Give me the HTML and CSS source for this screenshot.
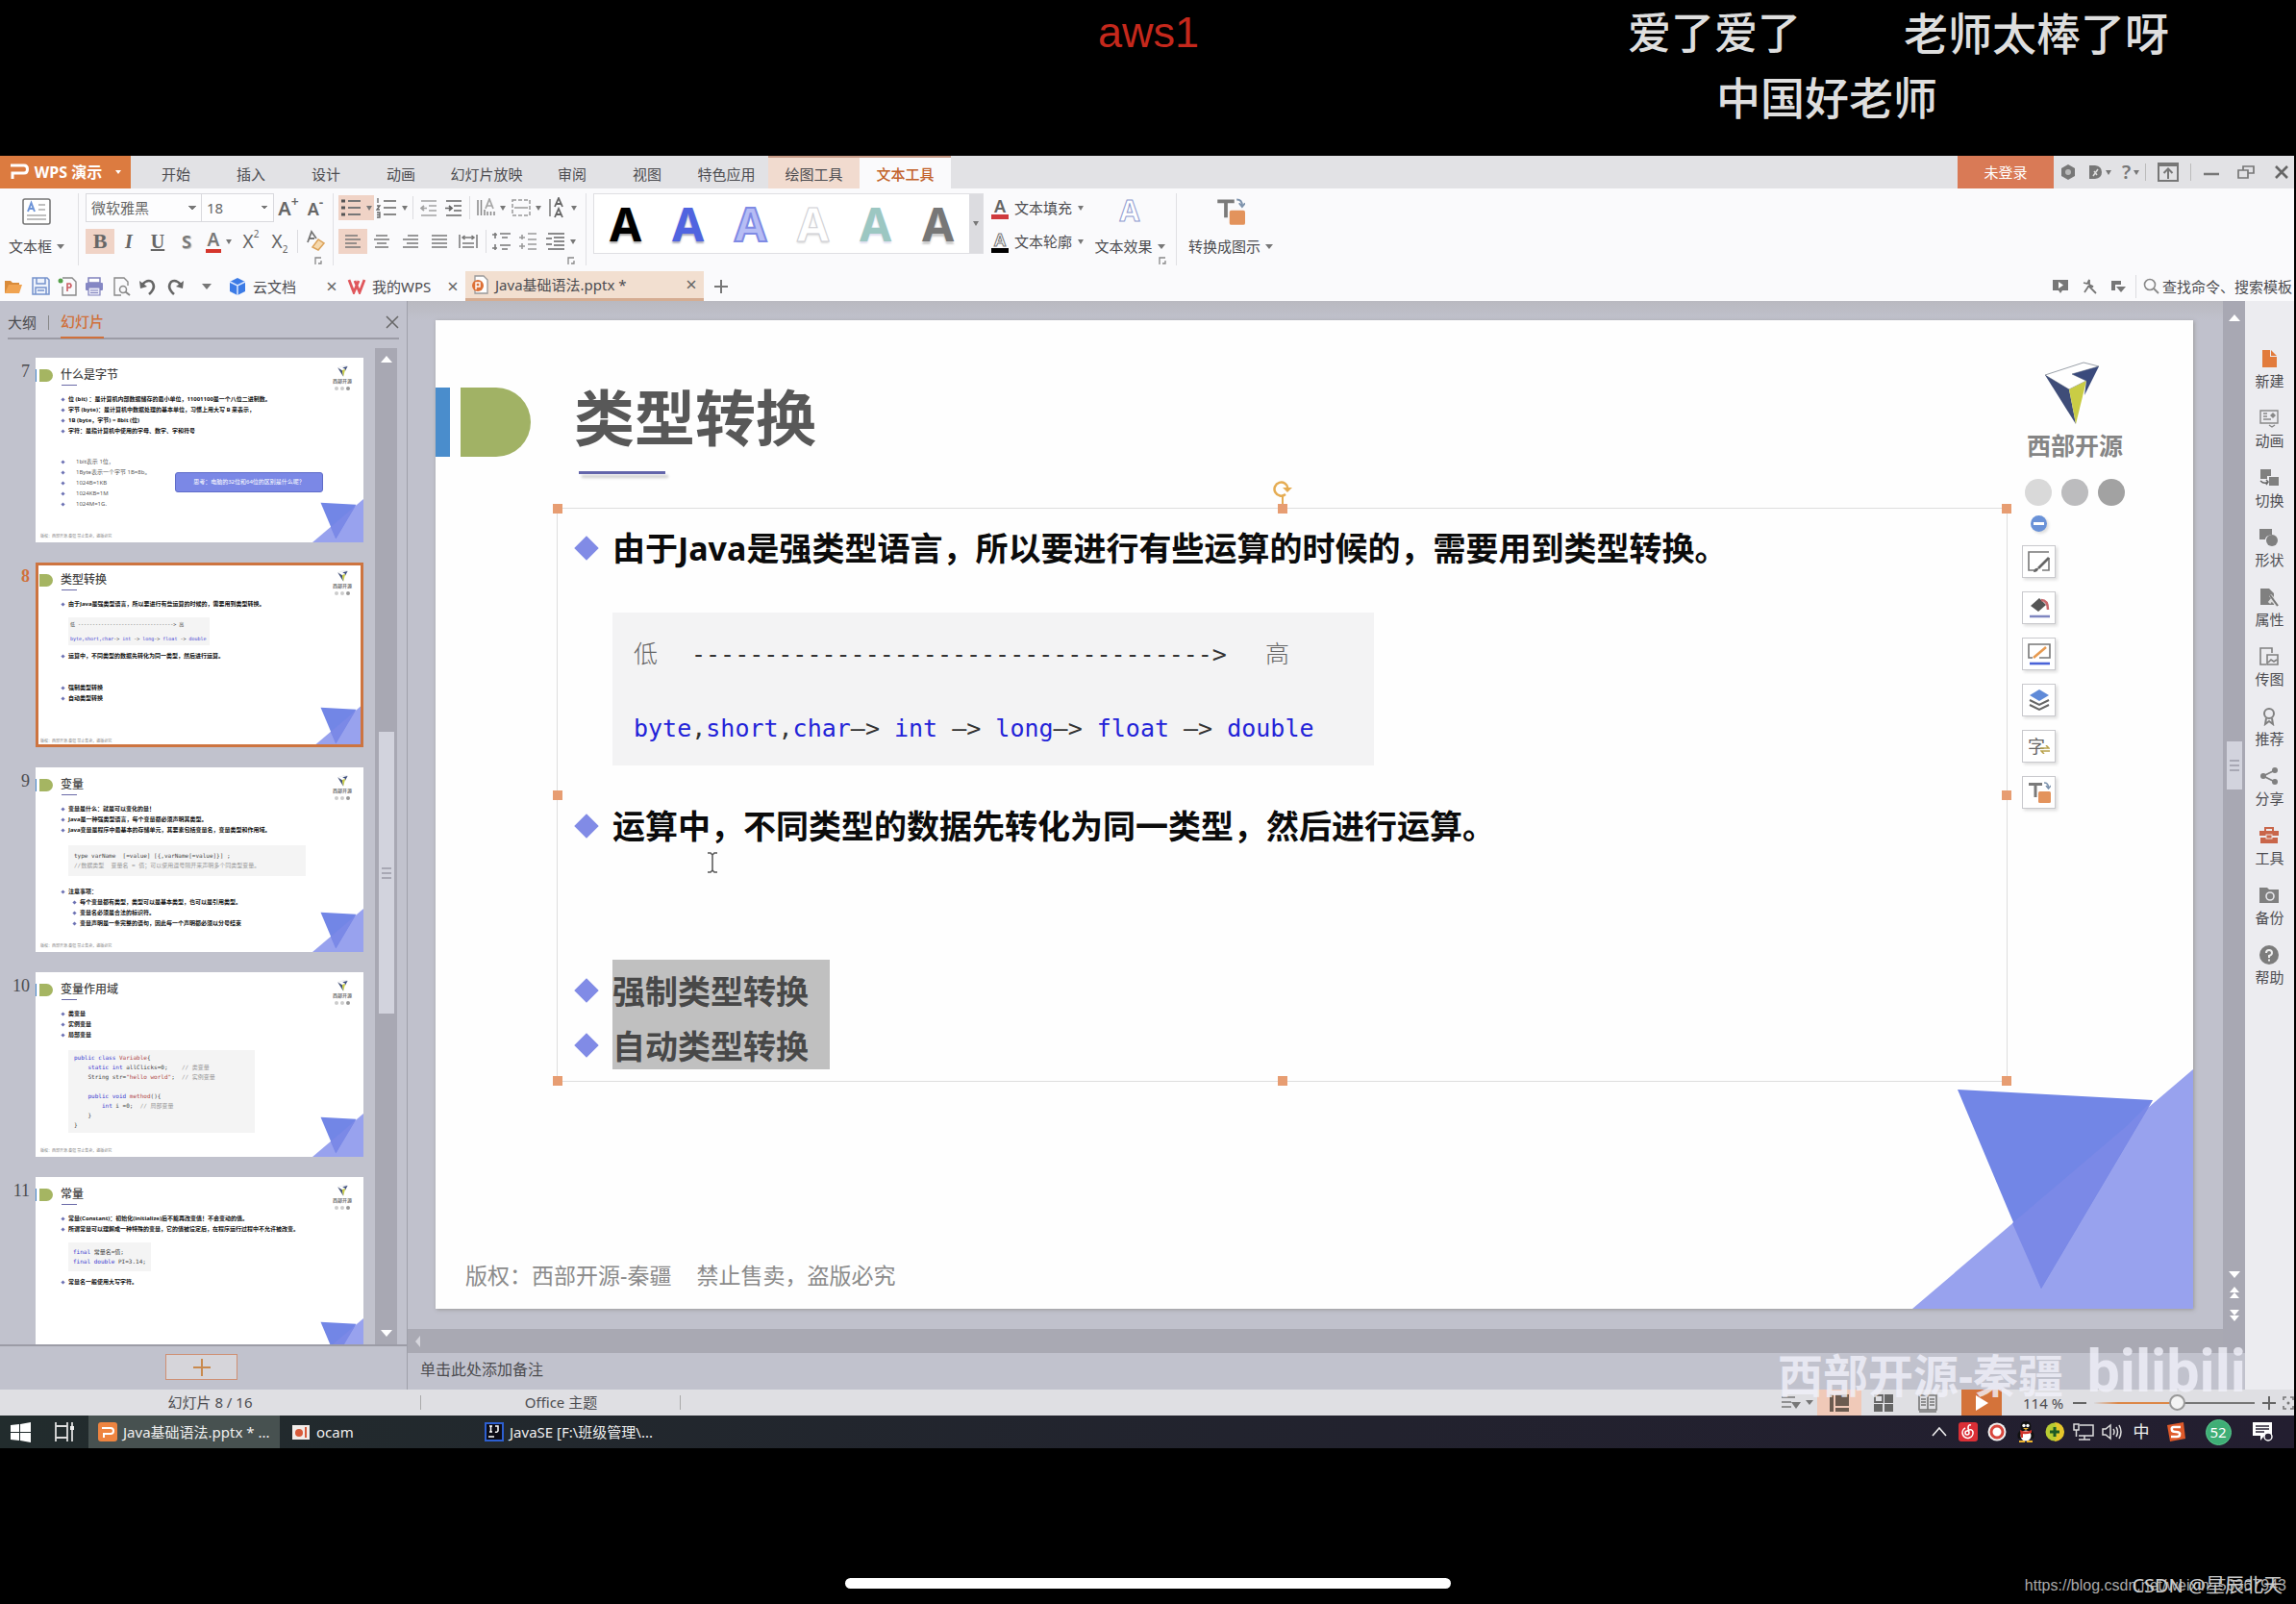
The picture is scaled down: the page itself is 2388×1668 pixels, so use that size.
FILE: index.html
```
<!DOCTYPE html>
<html lang="zh-CN">
<head>
<meta charset="utf-8">
<title>Java基础语法.pptx - WPS 演示</title>
<link rel="stylesheet" href="styles.css">
</head>
<body>
<svg class="defs" width="0" height="0" aria-hidden="true">
  <symbol id="brand" viewBox="0 0 57 66">
    <path d="M0 14 L40 1 L56 5 L32 65Z" fill="#fff"/>
    <path d="M0 14 L40 1 L56 5 L28 13 L43 20 L25 29Z" fill="#fff" stroke="#9aa0a8" stroke-width="1"/>
    <path d="M0 14 L25 29 L32 65Z" fill="#3f4d78"/>
    <path d="M25 29 L43 20 L32 65Z" fill="#c9cc45"/>
    <path d="M56 5 L28 13 L43 20 L41 35Z" fill="#3a4a7c"/>
  </symbol>
  <symbol id="corner" viewBox="0 0 292 249" preserveAspectRatio="none">
    <path d="M0 249 L292 0 V249Z" fill="#98a2ee"/>
    <path d="M47 21 L250 32 L134 228Z" fill="#7286e6"/>
    <path d="M104 160 L224 58 L250 32 L134 228Z" fill="#7b89e7"/>
  </symbol>
  <symbol id="launcher" viewBox="0 0 10 10"><path d="M2 9 V2 H8 M5 8 H8 V5" fill="none" stroke="#888" stroke-width="1.3"/></symbol>
  <symbol id="convert" viewBox="0 0 24 24">
    <path d="M1 2 H15 V5 H9.500 V17 H6.500 V5 H1Z" fill="#7a7a7a"/>
    <rect x="11" y="11" width="13" height="12" rx="1.500" fill="#e3935c"/>
    <path d="M17 2 Q21.500 2 21.500 7 M19 5 L21.500 8 L24 5" fill="none" stroke="#7d93ad" stroke-width="1.500"/>
  </symbol>
</svg>

<header class="chat">
  <span class="chat-line c1">aws1</span>
  <span class="chat-line c2">爱了爱了</span>
  <span class="chat-line c3">老师太棒了呀</span>
  <span class="chat-line c4">中国好老师</span>
</header>

<main class="app">
  <div class="titlebar">
    <button class="wps"><svg width="20" height="20" viewBox="0 0 20 20"><path d="M1 3 H15 Q18.500 3 18.500 7 Q18.500 11 15 11 H3 V17" fill="none" stroke="#fff" stroke-width="3"/></svg><b>WPS 演示</b><i class="caret light"></i></button>
    <nav class="tabs">
      <button>开始</button><button>插入</button><button>设计</button><button>动画</button><button class="wide">幻灯片放映</button><button>审阅</button><button>视图</button><button class="mid">特色应用</button><button class="big tool">绘图工具</button><button class="big current">文本工具</button>
    </nav>
    <button class="login">未登录</button>
    <div class="winbtns">
      <button class="w30" aria-label="设置"><svg width="16" height="16" viewBox="0 0 16 16"><path d="M8 0 L15 4 V12 L8 16 L1 12 V4Z" fill="#777"/><circle cx="8" cy="8" r="3" fill="#b9b9b9"/></svg></button>
      <button class="w35" aria-label="皮肤"><svg width="15" height="16" viewBox="0 0 15 16"><path d="M1 1 H7 Q14 2 14 8 Q14 14 7 15 H1Z" fill="#777"/><path d="M5 12 L10 5 M6 7 L9 11" stroke="#ddd" stroke-width="1.500"/></svg><i class="caret"></i></button>
      <button class="w30 help">?<i class="caret"></i></button>
      <i class="bar"></i>
      <button class="w46" aria-label="收起功能区"><svg width="22" height="20" viewBox="0 0 22 20"><path d="M1 1 H21 V19 H1Z M1 3 H21" fill="none" stroke="#777" stroke-width="2"/><path d="M11 17 V7 M6.500 11 L11 6.500 L15.500 11" fill="none" stroke="#777" stroke-width="2"/></svg></button>
      <i class="bar"></i>
      <button class="w42" aria-label="最小化"><svg width="16" height="16" viewBox="0 0 16 16"><path d="M0 10 H16" stroke="#777" stroke-width="2.500"/></svg></button>
      <button class="w30" aria-label="还原"><svg width="18" height="16" viewBox="0 0 18 16"><path d="M1 6 H11 V14 H1Z M6 6 V2 H17 V9 H11" fill="none" stroke="#777" stroke-width="1.700"/></svg></button>
      <button class="w35 close" aria-label="关闭"><svg width="14" height="14" viewBox="0 0 14 14"><path d="M1 1 L13 13 M13 1 L1 13" stroke="#666" stroke-width="2.600"/></svg></button>
    </div>
  </div>

  <div class="ribbon">
    <div class="group textbox">
      <button class="tall"><svg width="30" height="30" viewBox="0 0 30 30"><rect x="1" y="2" width="28" height="26" rx="2" fill="#fff" stroke="#777" stroke-width="1.600"/><path d="M6 15 L9.500 6 L13 15 M7 12 H12" fill="none" stroke="#6d94d8" stroke-width="2"/><path d="M17 8 H24 M17 13 H24 M5 19 H25 M5 23 H25" stroke="#aaa" stroke-width="1.500"/></svg><span>文本框<i class="caret"></i></span></button>
    </div>
    <div class="group font">
      <div class="row">
        <select class="face" aria-label="字体"><option>微软雅黑</option></select><select class="size" aria-label="字号"><option>18</option></select>
        <button class="w30 big-a">A<sup>+</sup></button><button class="w26 big-a small">A<sup>-</sup></button>
      </div>
      <div class="row">
        <button class="w30 serif on">B</button><button class="w30 serif it">I</button><button class="w30 serif un">U</button><button class="w30 sh">S</button>
        <button class="w37"><span class="fc">A</span><i class="caret"></i></button>
        <button class="w30 xs">X<sup>2</sup></button><button class="w30 xs">X<sub>2</sub></button><i class="sep"></i>
        <button class="w30" aria-label="清除格式"><svg width="22" height="24" viewBox="0 0 22 24"><path d="M3 13 L7 2 L12 9 M4 9 H10" fill="none" stroke="#777" stroke-width="1.800"/><path d="M8 18 L14 10 L20 14 L14 21Z" fill="#f6d9ae" stroke="#dba25a" stroke-width="1.500"/></svg></button>
      </div>
      <svg class="launcher" width="10" height="10"><use href="#launcher"/></svg>
    </div>
    <div class="group para">
      <div class="row">
        <button class="w37 on" aria-label="项目符号"><svg width="22" height="20" viewBox="0 0 22 20"><path d="M8 3 H21 M8 10 H21 M8 17 H21" stroke="#777" stroke-width="2"/><path d="M1 3 H5 M1 10 H5 M1 17 H5" stroke="#555" stroke-width="3"/></svg><i class="caret"></i></button>
        <button class="w37" aria-label="编号"><svg width="22" height="22" viewBox="0 0 22 22"><path d="M8 4 H21 M8 11 H21 M8 18 H21" stroke="#888" stroke-width="2"/><path d="M2 1 V6 M1 9 H4 L1 13 H4 M1 16 H4 V21 H1 M1 18.500 H4" fill="none" stroke="#666" stroke-width="1.300"/></svg><i class="caret"></i></button><i class="sep"></i>
        <button class="w26" aria-label="减少缩进"><svg width="18" height="18" viewBox="0 0 18 18"><path d="M1 2 H17 M9 7 H17 M9 12 H17 M1 17 H17 M7 9.500 H1 M4 7 L1 9.500 L4 12" fill="none" stroke="#a2a2a2" stroke-width="1.700"/></svg></button>
        <button class="w26" aria-label="增加缩进"><svg width="18" height="18" viewBox="0 0 18 18"><path d="M1 2 H17 M9 7 H17 M9 12 H17 M1 17 H17 M0 9.500 H6 M4 7 L7 9.500 L4 12" fill="none" stroke="#666" stroke-width="1.700"/></svg></button><i class="sep"></i>
        <button class="w37" aria-label="文字方向"><svg width="20" height="20" viewBox="0 0 20 20"><path d="M2 2 V18 M5.500 2 V18 M9 12 V18 M12 14 V18 M15.500 14 V18 M19 14 V18" stroke="#888" stroke-width="1.500"/><path d="M10 11 L14 1 L18 11 M11.500 8 H16.500" fill="none" stroke="#a5a5a5" stroke-width="1.700"/></svg><i class="caret"></i></button>
        <button class="w37" aria-label="对齐文本"><svg width="20" height="20" viewBox="0 0 20 20"><rect x="1" y="2" width="18" height="16" fill="none" stroke="#999" stroke-width="1.500" stroke-dasharray="4 2"/><path d="M3 10 H17" stroke="#999" stroke-width="1.500"/></svg><i class="caret"></i></button>
        <button class="w37" aria-label="字符间距"><svg width="20" height="22" viewBox="0 0 20 22"><path d="M3 2 V20" stroke="#777" stroke-width="1.500"/><path d="M8 10 L12 1 L16 10 M9.500 7 H14.500 M8 21 L12 12 L16 21 M9.500 18 H14.500" fill="none" stroke="#666" stroke-width="1.800"/></svg><i class="caret"></i></button>
      </div>
      <div class="row">
        <button class="w30 on" aria-label="左对齐"><svg width="16" height="16" viewBox="0 0 16 16"><path d="M0 2 H13 M0 6 H16 M0 10 H12 M0 14 H16" stroke="#777" stroke-width="1.600"/></svg></button>
        <button class="w30" aria-label="居中"><svg width="16" height="16" viewBox="0 0 16 16"><path d="M2 2 H14 M0 6 H16 M3 10 H13 M1 14 H15" stroke="#777" stroke-width="1.600"/></svg></button>
        <button class="w30" aria-label="右对齐"><svg width="16" height="16" viewBox="0 0 16 16"><path d="M5 2 H16 M0 6 H16 M4 10 H16 M0 14 H16" stroke="#777" stroke-width="1.600"/></svg></button>
        <button class="w30" aria-label="两端对齐"><svg width="16" height="16" viewBox="0 0 16 16"><path d="M0 2 H16 M0 6 H16 M0 10 H16 M0 14 H16" stroke="#777" stroke-width="1.600"/></svg></button>
        <button class="w30" aria-label="分散对齐"><svg width="20" height="16" viewBox="0 0 20 16"><path d="M1 1 V15 M19 1 V15 M4 4 H16 M6.500 2 L4 4 L6.500 6 M13.500 2 L16 4 L13.500 6 M4 10 H16 M4 14 H16" fill="none" stroke="#777" stroke-width="1.500"/></svg></button><i class="sep"></i>
        <button class="w26" aria-label="增大段落间距"><svg width="20" height="20" viewBox="0 0 20 20"><path d="M8 2 H19 M10 6 H16 M8 14 H19 M10 18 H16 M0 3 H5 M3 1 V7 M0 17 H5 M3 13 V19" stroke="#777" stroke-width="1.600"/></svg></button>
        <button class="w30" aria-label="减小段落间距"><svg width="20" height="20" viewBox="0 0 20 20"><path d="M9 2 H18 M9 8 H18 M9 13 H18 M9 18 H18 M0 6 H6 M3 3 V8 M0 15 H6 M3 12 V18" stroke="#999" stroke-width="1.600"/></svg></button>
        <button class="w37" aria-label="行距"><svg width="20" height="18" viewBox="0 0 20 18"><path d="M2 1 H19 M8 5 H19 M8 9 H19 M8 13 H19 M2 17 H19 M0 6 H6 M0 12 H6" stroke="#666" stroke-width="1.700"/></svg><i class="caret"></i></button>
      </div>
      <svg class="launcher" width="10" height="10"><use href="#launcher"/></svg>
    </div>
    <div class="group art">
      <div class="gallery">
        <button class="a1">A</button><button class="a2">A</button><button class="a3">A</button><button class="a4">A</button><button class="a5">A</button><button class="a6">A</button>
        <button class="more" aria-label="更多"><i class="caret"></i></button>
      </div>
      <div class="fills">
        <button><span class="fill-a red">A</span>文本填充<i class="caret"></i></button>
        <button><span class="fill-a line">A</span>文本轮廓<i class="caret"></i></button>
      </div>
      <div class="effects">
        <button class="tall"><span class="effect-a">A</span><span>文本效果<i class="caret"></i></span></button>
        <svg class="launcher" width="10" height="10"><use href="#launcher"/></svg>
      </div>
    </div>
    <div class="group last">
      <button class="tall"><svg width="30" height="30"><use href="#convert"/></svg><span>转换成图示<i class="caret"></i></span></button>
    </div>
  </div>

  <div class="docbar">
    <div class="quick">
      <button aria-label="打开"><svg width="20" height="18" viewBox="0 0 20 18"><path d="M1 16 V3 H7 L9 5 H16 V8" fill="#d98b3a"/><path d="M1 16 L5 7 H19 L16 16Z" fill="#f0a351"/></svg></button>
      <button aria-label="保存"><svg width="19" height="19" viewBox="0 0 19 19"><path d="M1 1 H16 L18 3 V18 H1Z" fill="#eef3fc" stroke="#7592cc" stroke-width="1.500"/><path d="M5 1 V7 H14 V1 M4 18 V11 H15 V18 M6 14 H13" fill="none" stroke="#7592cc" stroke-width="1.500"/></svg></button>
      <button aria-label="输出为PDF"><svg width="20" height="20" viewBox="0 0 20 20"><path d="M5 1 H15 L19 5 V19 H5 V10" fill="none" stroke="#888" stroke-width="1.400"/><path d="M10 15 V7 H13 Q15 9 13 11 H10" fill="none" stroke="#cc5c62" stroke-width="1.600"/><circle cx="3" cy="4" r="2.500" fill="#55a04a"/></svg></button>
      <button aria-label="打印"><svg width="20" height="20" viewBox="0 0 20 20"><path d="M4 1 H16 V6 H4Z" fill="#fff" stroke="#8183bd" stroke-width="1.500"/><rect x="1" y="6" width="18" height="8" rx="1" fill="#8587c4"/><path d="M4 11 H16 V19 H4Z M6 14 H14 M6 16.500 H14" fill="#e9e9f6" stroke="#8183bd" stroke-width="1.200"/></svg></button>
      <button aria-label="打印预览"><svg width="19" height="20" viewBox="0 0 19 20"><path d="M9 19 H2 V1 H12 L16 5 V9" fill="none" stroke="#888" stroke-width="1.400"/><circle cx="11" cy="13" r="3.500" fill="none" stroke="#888" stroke-width="1.500"/><path d="M13.500 15.500 L18 19" stroke="#888" stroke-width="2"/></svg></button>
      <button aria-label="撤销"><svg width="18" height="18" viewBox="0 0 18 18"><path d="M3 7 Q8 1 13 4 Q18 10 10 17" fill="none" stroke="#666" stroke-width="2.600"/><path d="M0 3 L1 11 L8 9Z" fill="#666"/></svg></button>
      <button aria-label="恢复"><svg width="18" height="18" viewBox="0 0 18 18"><path d="M15 7 Q10 1 5 4 Q0 10 8 17" fill="none" stroke="#666" stroke-width="2.600"/><path d="M18 3 L17 11 L10 9Z" fill="#666"/></svg></button>
      <button class="w42" aria-label="更多"><i class="caret big"></i></button>
    </div>
    <div class="docs">
      <div class="doc d1"><svg width="20" height="20" viewBox="0 0 20 20"><path d="M10 1 L18 5 V15 L10 19 L2 15 V5Z" fill="#3c7be6"/><path d="M2 5 L10 9 L18 5 M10 9 V19" fill="none" stroke="#dce8ff" stroke-width="1.500"/></svg><span>云文档</span><button aria-label="关闭">×</button></div>
      <div class="doc d2"><svg width="20" height="16" viewBox="0 0 20 16"><path d="M2 1 L7 14 L12 2 M8 2 L13 14 L18 1" fill="none" stroke="#e0575c" stroke-width="2.800"/></svg><span>我的WPS</span><button aria-label="关闭">×</button></div>
      <div class="doc d3"><svg width="20" height="20" viewBox="0 0 20 20"><path d="M5 1 H14 L18 5 V19 H5Z" fill="#fff" stroke="#999" stroke-width="1.300"/><circle cx="8" cy="11" r="6" fill="#dd7036"/><path d="M6 15 V8 H10 V12 H6" fill="none" stroke="#fff" stroke-width="1.400"/></svg><span>Java基础语法.pptx *</span><button aria-label="关闭">×</button></div>
      <button class="plus" aria-label="新建"><svg width="16" height="16" viewBox="0 0 16 16"><path d="M8 1 V15 M1 8 H15" stroke="#777" stroke-width="2"/></svg></button>
    </div>
    <div class="find">
      <button class="w30" aria-label="播放"><svg width="16" height="16" viewBox="0 0 16 16"><path d="M0 1 H16 V12 H10 L8 15 L6 12 H0Z" fill="#777"/><path d="M6 3 L11 6.500 L6 10Z" fill="#fff"/></svg></button>
      <button class="w30" aria-label="美化"><svg width="16" height="16" viewBox="0 0 16 16"><path d="M2 4 L6 5 L8 1 L8 6 L12 8 L8 8 L15 15 M7 8 L3 14" fill="none" stroke="#777" stroke-width="1.800"/></svg></button>
      <button class="w30" aria-label="切换"><svg width="16" height="16" viewBox="0 0 16 16"><path d="M1 2 H11 V6 H5 V12 H1Z" fill="#777"/><path d="M6 8 H16 L11 14Z" fill="#777"/></svg></button>
      <i class="sep"></i>
      <svg width="18" height="18" viewBox="0 0 18 18"><circle cx="7" cy="7" r="5.500" fill="none" stroke="#888" stroke-width="1.600"/><path d="M11 11 L16 16" stroke="#888" stroke-width="1.800"/></svg>
      <input type="text" aria-label="查找" value="查找命令、搜索模板">
    </div>
  </div>

  <div class="work">
    <aside class="panel">
      <div class="panel-head"><button>大纲</button><i></i><button class="sel">幻灯片</button><button class="x" aria-label="关闭"><svg width="14" height="14" viewBox="0 0 14 14"><path d="M1 1 L13 13 M13 1 L1 13" stroke="#666" stroke-width="1.500"/></svg></button></div>
      <div class="list">
        <ol class="thumbs">
          <li><span class="num">7</span>
            <article class="thumb"><header><h3>什么是字节</h3><div class="mini"><svg width="11" height="12"><use href="#brand"/></svg><b>西部开源</b><p><i></i><i></i><i></i></p></div></header>
              <ul class="strong"><li>位 (bit) &#xff1a;是计算机内部数据储存的最小单位&#xff0c;11001100是一个八位二进制数。</li><li>字节 (byte)&#xff1a;是计算机中数据处理的基本单位&#xff0c;习惯上用大写 B 来表示&#xff0c;</li><li>1B (byte&#xff0c;字节) = 8bit (位)</li><li>字符&#xff1a;是指计算机中使用的字母、数字、字和符号</li></ul>
              <div class="pair"><ul class="thin"><li>1bit表示 1位&#xff0c;</li><li>1Byte表示一个字节 1B=8b。</li><li>1024B=1KB</li><li>1024KB=1M</li><li>1024M=1G.</li></ul><p class="callout">思考&#xff1a;电脑的32位和64位的区别是什么呢&#xff1f;</p></div>
              <footer>版权&#xff1a;西部开源-秦疆 禁止售卖&#xff0c;盗版必究</footer><svg class="tri"><use href="#corner"/></svg></article></li>
          <li class="active"><span class="num">8</span>
            <article class="thumb"><header><h3>类型转换</h3><div class="mini"><svg width="11" height="12"><use href="#brand"/></svg><b>西部开源</b><p><i></i><i></i><i></i></p></div></header>
              <ul class="strong"><li>由于Java是强类型语言&#xff0c;所以要进行有些运算的时候的&#xff0c;需要用到类型转换。</li></ul>
              <pre class="code k8">低 ---------------------------------&gt; 高
<b>byte,short,char</b>-&gt; <b>int</b> -&gt; <b>long</b>-&gt; <b>float</b> -&gt; <b>double</b></pre>
              <ul class="strong s8"><li>运算中&#xff0c;不同类型的数据先转化为同一类型&#xff0c;然后进行运算。</li></ul>
              <ul class="strong e8"><li>强制类型转换</li><li>自动类型转换</li></ul>
              <footer>版权&#xff1a;西部开源-秦疆 禁止售卖&#xff0c;盗版必究</footer><svg class="tri"><use href="#corner"/></svg></article></li>
          <li><span class="num">9</span>
            <article class="thumb"><header><h3>变量</h3><div class="mini"><svg width="11" height="12"><use href="#brand"/></svg><b>西部开源</b><p><i></i><i></i><i></i></p></div></header>
              <ul class="strong"><li>变量是什么&#xff1a;就是可以变化的量&#xff01;</li><li>Java是一种强类型语言&#xff0c;每个变量都必须声明其类型。</li><li>Java变量是程序中最基本的存储单元&#xff0c;其要素包括变量名&#xff0c;变量类型和作用域。</li></ul>
              <pre class="code k9">type varName  [=value] [{,varName[=value]}] ;
<s>//数据类型  变量名 = 值&#xff1b;可以使用逗号隔开来声明多个同类型变量。</s></pre>
              <ul class="strong s9"><li>注意事项&#xff1a;</li><li class="sub">每个变量都有类型&#xff0c;类型可以是基本类型&#xff0c;也可以是引用类型。</li><li class="sub">变量名必须是合法的标识符。</li><li class="sub">变量声明是一条完整的语句&#xff0c;因此每一个声明都必须以分号结束</li></ul>
              <footer>版权&#xff1a;西部开源-秦疆 禁止售卖&#xff0c;盗版必究</footer><svg class="tri"><use href="#corner"/></svg></article></li>
          <li><span class="num">10</span>
            <article class="thumb"><header><h3>变量作用域</h3><div class="mini"><svg width="11" height="12"><use href="#brand"/></svg><b>西部开源</b><p><i></i><i></i><i></i></p></div></header>
              <ul class="strong"><li>类变量</li><li>实例变量</li><li>局部变量</li></ul>
              <pre class="code k10"><b>public class</b> <em>Variable</em>{
    <b>static int</b> allClicks=0;    <s>// 类变量</s>
    String str=<em>"hello world"</em>;  <s>// 实例变量</s>

    <b>public void</b> <em>method</em>(){
        <b>int</b> i =0;  <s>// 局部变量</s>
    }
}</pre>
              <footer>版权&#xff1a;西部开源-秦疆 禁止售卖&#xff0c;盗版必究</footer><svg class="tri"><use href="#corner"/></svg></article></li>
          <li><span class="num">11</span>
            <article class="thumb"><header><h3>常量</h3><div class="mini"><svg width="11" height="12"><use href="#brand"/></svg><b>西部开源</b><p><i></i><i></i><i></i></p></div></header>
              <ul class="strong"><li>常量(Constant)&#xff1a;初始化(initialize)后不能再改变值&#xff01;不会变动的值。</li><li>所谓常量可以理解成一种特殊的变量&#xff0c;它的值被设定后&#xff0c;在程序运行过程中不允许被改变。</li></ul>
              <pre class="code k11"><b>final</b> 常量名=值;
<b>final double</b> PI=3.14;</pre>
              <ul class="strong s8"><li>常量名一般使用大写字符。</li></ul>
              <svg class="tri"><use href="#corner"/></svg></article></li>
        </ol>
        <div class="vbar"><i class="up"></i><span class="grip"><svg width="10" height="12" viewBox="0 0 10 12"><path d="M0 1 H10 M0 6 H10 M0 11 H10" stroke="#9a9aa6" stroke-width="1.500"/></svg></span><i class="down"></i></div>
      </div>
      <div class="add"><button aria-label="新建幻灯片"><svg width="18" height="18" viewBox="0 0 18 18"><path d="M9 0 V18 M0 9 H18" stroke="#c98a4e" stroke-width="2"/></svg></button></div>
    </aside>

    <section class="editor">
      <div class="stage">
        <article class="slide">
          <header class="slide-head">
            <i class="blue"></i><i class="green"></i>
            <h1>类型转换</h1>
            <div class="logo"><svg width="57" height="66"><use href="#brand"/></svg><b>西部开源</b><p><i></i><i></i><i></i></p></div>
          </header>
          <div class="body-box">
            <p class="pt">由于Java是强类型语言&#xff0c;所以要进行有些运算的时候的&#xff0c;需要用到类型转换。</p>
            <pre class="sample"><span><q>低</q>------------------------------------&gt;<q class="hi">高</q></span><span><b>byte</b>,<b>short</b>,<b>char</b>—&gt; <b>int</b> —&gt; <b>long</b>—&gt; <b>float</b> —&gt; <b>double</b></span></pre>
            <p class="pt">运算中&#xff0c;不同类型的数据先转化为同一类型&#xff0c;然后进行运算。</p>
            <div class="picked"><p class="pt"><mark>强制类型转换</mark></p><p class="pt"><mark>自动类型转换</mark></p></div>
            <i class="h tl"></i><i class="h tc"></i><i class="h tr"></i><i class="h ml"></i><i class="h mr"></i><i class="h bl"></i><i class="h bc"></i><i class="h br"></i>
            <svg class="rotate" width="20" height="24" viewBox="0 0 20 24"><path d="M13 14 A7 7 0 1 1 15.500 8" fill="none" stroke="#e5ac52" stroke-width="2.500"/><path d="M10 7 H20 L15 12Z" fill="#e5ac52"/><path d="M10 15 V24" stroke="#e5ac52" stroke-width="2"/></svg>
            <svg class="ibeam" width="12" height="22" viewBox="0 0 12 22"><path d="M1 1 H4 L6 3 L8 1 H11 M6 3 V19 M1 21 H4 L6 19 L8 21 H11" fill="none" stroke="#555" stroke-width="1.500"/></svg>
          </div>
          <footer>版权&#xff1a;西部开源-秦疆<span>禁止售卖&#xff0c;盗版必究</span></footer>
          <svg class="corner"><use href="#corner"/></svg>
          <div class="floats">
            <button class="min" aria-label="收起"></button>
            <button aria-label="样式"><svg width="24" height="24" viewBox="0 0 24 24"><path d="M22 8 V21 H15 M7 21 H1 V2 H22" fill="none" stroke="#777" stroke-width="1.600"/><path d="M22 8 L11 19" stroke="#666" stroke-width="2.600"/><path d="M6 23 Q7 18 11 19 Q11 23 6 23Z" fill="#666"/></svg></button>
            <button aria-label="填充"><svg width="24" height="24" viewBox="0 0 24 24"><path d="M3 10 L12 2 L19 9 L11 16Z" fill="#555"/><path d="M14 4 Q21 4 21 14" fill="none" stroke="#c8686c" stroke-width="2.500"/><path d="M2 21 H23" stroke="#7f86c0" stroke-width="2.500"/></svg></button>
            <button aria-label="轮廓"><svg width="24" height="24" viewBox="0 0 24 24"><path d="M5 16 H1 V2 H23 V16 H12" fill="none" stroke="#777" stroke-width="1.600"/><path d="M19 5 L6 16" stroke="#e79a50" stroke-width="2.600"/><path d="M2 22 H23" stroke="#4a63d8" stroke-width="2.600"/></svg></button>
            <button aria-label="层次"><svg width="24" height="24" viewBox="0 0 24 24"><path d="M12 1 L22 7 L12 13 L2 7Z" fill="#5f8ad8"/><path d="M2 12 L12 17 L22 12 M2 17 L12 22 L22 17" fill="none" stroke="#666" stroke-width="2"/></svg></button>
            <button class="zi" aria-label="字">字<svg width="10" height="9" viewBox="0 0 10 9"><path d="M0 3 H9 L6 0 M10 6 H1 L4 9" fill="none" stroke="#b9a24c" stroke-width="1.500"/></svg></button>
            <button aria-label="转换"><svg width="24" height="24"><use href="#convert"/></svg></button>
          </div>
        </article>
      </div>
      <div class="hbar"><i></i></div>
      <div class="vbar main"><i class="up"></i><span class="grip"><svg width="10" height="14" viewBox="0 0 10 14"><path d="M0 2 H10 M0 7 H10 M0 12 H10" stroke="#9a9aa6" stroke-width="1.500"/></svg></span><span class="ends"><i class="down"></i><svg width="12" height="14" viewBox="0 0 12 14"><path d="M6 0 L11 6 H1Z M6 6 L11 12 H1Z" fill="#fff"/></svg><svg width="12" height="14" viewBox="0 0 12 14"><path d="M1 1 H11 L6 7Z M1 7 H11 L6 13Z" fill="#fff"/></svg></span></div>
      <input class="notes" type="text" aria-label="备注" value="单击此处添加备注">
    </section>

    <nav class="side">
      <button><svg width="20" height="20" viewBox="0 0 20 20"><path d="M3 1 H11 V8 H18 V19 H3Z M12 1 L18 7 H12Z" fill="#e27b3c"/></svg>新建</button>
      <button><svg width="20" height="20" viewBox="0 0 20 20"><path d="M1 2 H19 V15 H1Z M4 5 H8 M4 8 H8 M4 11 H12 M10 17 L13 19 L16 17" fill="none" stroke="#888" stroke-width="1.400"/><path d="M14 4 L17 7 L14 10 L11 7Z" fill="#888"/></svg>动画</button>
      <button><svg width="20" height="20" viewBox="0 0 20 20"><path d="M1 1 H12 V8 H8 V11 H1Z M10 9 H20 V18 H10Z" fill="#808080"/><path d="M1 13 Q5 17 9 14 M7 12 L9 14 L7 17" fill="none" stroke="#666" stroke-width="1.500"/></svg>切换</button>
      <button><svg width="20" height="20" viewBox="0 0 20 20"><path d="M0 1 H13 V7 Q6 8 6 12 H0Z" fill="#808080"/><circle cx="13" cy="13" r="6" fill="#808080"/></svg>形状</button>
      <button><svg width="20" height="20" viewBox="0 0 20 20"><path d="M1 1 H10 L15 6 V18 H1Z" fill="#808080"/><path d="M11 8 L14 11 L10 16 M13 13 L19 19" stroke="#ddd" stroke-width="3" fill="none"/><path d="M11 8 L19 19" stroke="#777" stroke-width="2"/></svg>属性</button>
      <button><svg width="20" height="20" viewBox="0 0 20 20"><path d="M7 18 H1 V1 H13 V6 M8 8 H19 V18 H8Z M9 16 L12 13 L15 15 L18 13" fill="none" stroke="#808080" stroke-width="1.600"/></svg>传图</button>
      <button><svg width="20" height="20" viewBox="0 0 20 20"><circle cx="10" cy="7" r="5" fill="none" stroke="#808080" stroke-width="2"/><path d="M7 12 L6 18 L10 15 L14 18 L13 12" fill="none" stroke="#808080" stroke-width="2"/></svg>推荐</button>
      <button><svg width="20" height="20" viewBox="0 0 20 20"><path d="M16 4 L4 10 L16 16" fill="none" stroke="#808080" stroke-width="1.800"/><circle cx="16" cy="4" r="3" fill="#808080"/><circle cx="4" cy="10" r="3" fill="#808080"/><circle cx="16" cy="16" r="3" fill="#808080"/></svg>分享</button>
      <button><svg width="20" height="20" viewBox="0 0 20 20"><path d="M6 5 V2 H14 V5" fill="none" stroke="#c9664a" stroke-width="2"/><path d="M0 5 H20 V10 H0Z M1 12 H19 V18 H1Z" fill="#c9664a"/><rect x="7" y="9" width="6" height="4" fill="#c9664a" stroke="#f0e4e0"/></svg>工具</button>
      <button><svg width="20" height="20" viewBox="0 0 20 20"><path d="M0 2 H8 L10 4 H20 V18 H0Z" fill="#808080"/><circle cx="11" cy="11" r="4" fill="none" stroke="#e8e8ec" stroke-width="1.600"/></svg>备份</button>
      <button><svg width="20" height="20" viewBox="0 0 20 20"><circle cx="10" cy="10" r="10" fill="#7c7c7c"/><path d="M7 8 Q7 5 10 5 Q13 5 13 8 Q13 10 10 11 V13 M10 14.500 V16.500" fill="none" stroke="#eee" stroke-width="2"/></svg>帮助</button>
    </nav>
  </div>

  <div class="status">
    <span class="pages">幻灯片 8 / 16</span><span class="theme">Office 主题</span>
    <div class="views">
      <button class="w42" aria-label="备注"><svg width="20" height="16" viewBox="0 0 20 16"><path d="M0 2 H14 M0 7 H10 M0 12 H10" stroke="#777" stroke-width="1.600"/><path d="M10 7 H20 L15 14Z" fill="#777"/></svg><i class="caret"></i></button>
      <button class="w46 on" aria-label="普通视图"><svg width="20" height="20" viewBox="0 0 20 20"><path d="M0 1 H4 V19 H0Z M6 1 H20 V13 H6Z M6 15 H20 V19 H6Z" fill="#6b5b50"/></svg></button>
      <button class="w46" aria-label="浏览视图"><svg width="20" height="20" viewBox="0 0 20 20"><path d="M1 2 H9 V9 H1Z" fill="none" stroke="#666" stroke-width="1.800"/><path d="M11 1 H20 V10 H11Z M0 11 H9 V19 H0Z M11 11 H20 V19 H11Z" fill="#666"/></svg></button>
      <button class="w46" aria-label="阅读视图"><svg width="20" height="20" viewBox="0 0 20 20"><path d="M1 2 H10 V17 H1Z M10 2 H19 V17 H10Z M3 6 H8 M3 9 H8 M3 12 H8 M12 6 H17 M12 9 H17 M12 12 H17 M1 19 H19" fill="none" stroke="#777" stroke-width="1.600"/></svg></button>
      <button class="play" aria-label="放映"><svg width="14" height="16" viewBox="0 0 14 16"><path d="M1 0 L14 8 L1 16Z" fill="#fff"/></svg></button>
      <span class="pct">114 %</span>
      <button class="w26" aria-label="缩小"><svg width="14" height="14" viewBox="0 0 14 14"><path d="M0 7 H14" stroke="#666" stroke-width="2"/></svg></button>
      <input type="range" aria-label="缩放" min="0" max="100" value="52">
      <button class="w26" aria-label="放大"><svg width="14" height="14" viewBox="0 0 14 14"><path d="M0 7 H14 M7 0 V14" stroke="#666" stroke-width="2"/></svg></button>
      <button class="fit" aria-label="适应窗口"><svg width="12" height="14" viewBox="0 0 12 14"><path d="M1 4 V1 H4 M8 1 H11 V4 M1 10 V13 H4 M8 13 H11 V10" fill="none" stroke="#777" stroke-width="1.600"/><circle cx="6" cy="7" r="1.500" fill="#777"/></svg></button>
    </div>
  </div>

  <div class="taskbar">
    <button class="start" aria-label="开始"><svg width="21" height="21" viewBox="0 0 21 21"><path d="M0 3 L9 2 V10 H0Z M10 2 L21 0 V10 H10Z M0 11 H9 V19 L0 18Z M10 11 H21 V21 L10 19Z" fill="#fff"/></svg></button>
    <button class="start view" aria-label="任务视图"><svg width="22" height="20" viewBox="0 0 22 20"><path d="M2 0 V4 H14 V0 M2 20 V16 H14 V20 M2 4 V16 M14 4 V16 M19 0 V4 M19 8 V20" fill="none" stroke="#ddd" stroke-width="1.800"/><rect x="17" y="4" width="4" height="4" fill="#eee"/></svg></button>
    <button class="task open"><svg width="20" height="20" viewBox="0 0 20 20"><rect width="20" height="20" rx="3" fill="#ee8440"/><path d="M4 6 H13 Q16 6 16 9 Q16 12 13 12 H6 V16" fill="none" stroke="#fff" stroke-width="2"/></svg>Java基础语法.pptx * ...</button>
    <button class="task"><svg width="20" height="20" viewBox="0 0 20 20"><rect x="1" y="3" width="18" height="15" fill="#f2ece9"/><circle cx="8" cy="11" r="4" fill="#d85a3a"/><path d="M15 5 V16" stroke="#d85a3a" stroke-width="2"/></svg>ocam</button>
    <button class="task"><svg width="20" height="20" viewBox="0 0 20 20"><rect width="20" height="20" fill="#2d5fd0"/><rect x="2" y="2" width="16" height="16" fill="#0c0c16"/><path d="M5 4 H8 M6.500 4 V10 M5 10 H8 M11 4 H14 V9 Q13 11 11 10 M4 15 H10" fill="none" stroke="#fff" stroke-width="1.500"/></svg>JavaSE [F:\班级管理\...</button>
    <div class="tray">
      <button aria-label="展开"><svg width="16" height="10" viewBox="0 0 16 10"><path d="M1 9 L8 1 L15 9" fill="none" stroke="#eee" stroke-width="1.600"/></svg></button>
      <button aria-label="音乐"><svg width="20" height="20" viewBox="0 0 20 20"><rect width="20" height="20" rx="3" fill="#db2f36"/><path d="M13 3 Q10 2 10 6 L11 11 A2 2 0 1 1 9 9 Q14 6 15 10 A5.500 5.500 0 1 1 7 6" fill="none" stroke="#fff" stroke-width="1.600"/></svg></button>
      <button aria-label="录屏"><svg width="20" height="20" viewBox="0 0 20 20"><circle cx="10" cy="10" r="9.500" fill="#f2f2f2"/><circle cx="10" cy="10" r="6" fill="#fff" stroke="#d8463c" stroke-width="3"/></svg></button>
      <button aria-label="QQ"><svg width="20" height="22" viewBox="0 0 20 22"><path d="M2 18 Q0 12 5 9 Q3 0 10 0 Q17 0 15 9 Q20 12 18 18Z" fill="#111"/><ellipse cx="10" cy="15" rx="5.500" ry="5.500" fill="#fff"/><path d="M4 9 Q10 12 16 9 V12 Q10 14 7 13 V17 H5Z" fill="#d0342c"/><circle cx="8" cy="4.500" r="1.700" fill="#fff"/><circle cx="12" cy="4.500" r="1.700" fill="#fff"/><path d="M7 7 H13 L10 9Z M3 20 H9 V22 H3Z M11 20 H17 V22 H11Z" fill="#edb32d"/></svg></button>
      <button aria-label="安全"><svg width="20" height="20" viewBox="0 0 20 20"><circle cx="10" cy="10" r="9.500" fill="#b8cc33"/><path d="M10 0 A10 10 0 0 1 10 20 Q15 10 10 0Z" fill="#e6c62b"/><path d="M10 5 V15 M5 10 H15" stroke="#1d5a24" stroke-width="3"/></svg></button>
      <button aria-label="网络"><svg width="22" height="20" viewBox="0 0 22 20"><path d="M7 3 H21 V14 H6 M6 18 H18 M12 14 V18 M1 2 H6 V8 H1Z M3.500 8 V15" fill="none" stroke="#ddd" stroke-width="1.500"/></svg></button>
      <button aria-label="音量"><svg width="22" height="18" viewBox="0 0 22 18"><path d="M1 6 H4 L9 2 V16 L4 12 H1Z M12 6 Q14 9 12 12 M15 4 Q18 9 15 14 M18 2 Q22 9 18 16" fill="none" stroke="#ddd" stroke-width="1.500"/></svg></button>
      <button class="ime">中</button>
      <button class="w42" aria-label="输入法"><svg width="20" height="20" viewBox="0 0 20 20"><path d="M1 3 L18 0 L20 17 L4 20Z" fill="#df5a2a"/><path d="M15 5 H8 Q5 5 6 8 Q6 10 10 10 Q15 10 14 13 Q14 15 11 15 H5" fill="none" stroke="#fff" stroke-width="2.600"/></svg></button>
      <button class="w46"><span class="badge">52</span></button>
      <button class="w46" aria-label="通知"><svg width="22" height="22" viewBox="0 0 22 22"><path d="M1 1 H21 V15 H13 L9 20 V15 H1Z" fill="#fff"/><path d="M4 5 H18 M4 8 H18 M4 11 H13" stroke="#2a2536" stroke-width="1.500"/><circle cx="17" cy="16" r="4" fill="#2a2536" stroke="#fff" stroke-width="1.400"/></svg></button>
    </div>
  </div>

  <div class="mark author">西部开源-秦疆</div>
  <div class="mark site">bilibili</div>
</main>

<footer class="bottom">
  <i class="home"></i>
  <span class="url">https://blog.csdn.net/weixin_50367943</span>
  <span class="csdn">CSDN @星辰北天</span>
</footer>
</body>
</html>
```
FILE: styles.css
```
* { box-sizing: border-box; margin: 0; padding: 0; }
html { background: #000; }
body { min-height: 100vh; display: flex; flex-direction: column; background: #000; color: #4c4c50; font: 15px/20px "Noto Sans", "Noto Sans CJK SC", sans-serif; }
button, input, select { font: inherit; color: inherit; background: none; border: 0; border-radius: 0; outline: 0; }
button { display: inline-flex; align-items: center; justify-content: center; flex: none; white-space: nowrap; }
svg { display: block; flex: none; }
ul, ol { list-style: none; }
.defs { position: absolute; }

.w26 { width: 26px; } .w30 { width: 30px; } .w35 { width: 35px; } .w37 { width: 37px; } .w42 { width: 42px; } .w46 { width: 46px; }
.caret { flex: none; width: 0; height: 0; border: 4px solid transparent; border-bottom: 0; border-top: 5px solid #777; margin-left: 5px; }
.caret.light { border-top-color: #fff; }
.caret.big { border-width: 6px 5px 0; margin: 0; }
.w37 .caret, .winbtns .caret { border-width: 5px 3px 0; }
.sep { flex: none; width: 1px; height: 24px; background: #dcdce0; margin: 0 3px; }

.chat { position: relative; height: 162px; font: 500 45px/60px "Noto Sans CJK SC", sans-serif; color: #dedede; }
.chat-line { position: absolute; white-space: nowrap; top: 2px; }
.c1 { left: 1142px; top: 4px; color: #c5281c; font-family: "Liberation Sans", sans-serif; font-weight: 400; }
.c2 { left: 1693px; } .c3 { left: 1980px; } .c4 { left: 1785px; top: 69px; }
.c3, .c4 { font-size: 46px; }

.app { position: relative; background: #fafafc; margin-right: 2px; }
.titlebar { display: flex; height: 34px; background: #e2e2e5; }
.wps { width: 136px; background: #dc7b40; color: #fff; gap: 6px; font-size: 16px; }
.wps .caret { margin-left: 8px; border-width: 4px 3px 0; }
.tabs { display: flex; padding-left: 8px; }
.tabs button { width: 78px; padding-top: 3px; }
.tabs .wide { width: 100px; }
.tabs .mid { width: 87px; }
.tabs .big { width: 95px; border-top: 2px solid #c79a86; padding-top: 1px; }
.tabs .tool { background: #f1dbcf; }
.tabs .current { background: #fafafc; color: #c2622a; font-weight: 500; }
.login { width: 100px; background: #d97a56; color: #fff; margin-left: auto; }
.winbtns { display: flex; align-items: center; }
.winbtns .caret { margin-left: 3px; }
.winbtns .bar { width: 1px; height: 18px; background: #bbb; }
.winbtns .close { padding-left: 8px; }
.help { font-size: 20px; font-weight: 600; color: #777; }

.ribbon { display: flex; height: 86px; padding-top: 5px; }
.group { position: relative; border-right: 1px solid #e0e0e4; height: 75px; }
.row { display: flex; align-items: center; height: 30px; margin-bottom: 5px; }
.row button { height: 26px; }
.row .on { background: #f0d3c6; }
.launcher { position: absolute; right: 10px; bottom: 0; }
.tall { flex-direction: column; height: 65px; justify-content: space-between; padding-top: 4px; }
.tall span { display: flex; align-items: center; }
.textbox { width: 82px; padding-left: 9px; }
.font { width: 265px; padding-left: 7px; }
.font select { appearance: none; height: 30px; border: 1px solid #d9d9de; background: #fdfdfe; padding: 0 5px; color: #666; background-image: linear-gradient(45deg, transparent 50%, #777 50%), linear-gradient(-45deg, transparent 50%, #777 50%); background-size: 4px 4px; background-repeat: no-repeat; background-position: right 9px center, right 5px center; }
.face { width: 121px; }
.font .size { width: 75px; border-left: 0; }
.big-a { font-size: 20px; font-weight: 600; color: #666; align-items: flex-start; line-height: 28px; }
.big-a sup { font-size: 14px; line-height: 14px; }
.big-a.small { font-size: 18px; }
.serif { font: 600 20px/24px "Liberation Serif", serif; color: #666; }
.serif.on { font-weight: 700; font-size: 22px; }
.it { font-style: italic; } .un { text-decoration: underline; }
.sh { font-size: 18px; font-weight: 600; color: #777; text-shadow: 1px 1px 1px #aaa; }
.fc { font-size: 19px; line-height: 19px; font-weight: 600; color: #777; border-bottom: 4px solid #d5352c; padding: 0 2px; }
.xs { font-size: 19px; color: #666; }
.xs sup, .xs sub { font-size: 10px; line-height: 10px; }
.xs sup { align-self: flex-start; } .xs sub { align-self: flex-end; }
.para { width: 263px; padding-left: 5px; }
.art { display: flex; width: 614px; padding-left: 7px; }
.gallery { display: flex; width: 406px; height: 63px; border: 1px solid #dfdfe3; background: #fff; }
.gallery button { width: 65px; font: 700 48px/60px "Noto Sans", sans-serif; color: #000; }
.gallery .a1 { text-shadow: 0 2px 2px #aaa; }
.gallery .a2 { color: #5064e0; text-shadow: 0 2px 2px #aab; }
.gallery .a3 { color: #b6bdf5; -webkit-text-stroke: 2px #7f8ae4; }
.gallery .a4 { color: #fff; -webkit-text-stroke: 1px #cfcfd4; text-shadow: 0 2px 2px #ddd; }
.gallery .a5 { color: #9cc7c2; text-shadow: 0 2px 2px #dde; }
.gallery .a6 { color: #777; text-shadow: 0 3px 2px #ccc; }
.gallery .more { width: 14px; background: #dcdce0; }
.gallery .caret { margin: 0; border-width: 5px 3px 0; }
.fills { display: grid; grid-template-rows: 30px 30px; gap: 5px; width: 113px; padding-left: 8px; }
.fills button { gap: 6px; justify-content: flex-start; }
.fills .caret { margin: 0; border-width: 5px 3px 0; }
.fill-a { width: 18px; font: 600 18px/18px "Noto Sans", sans-serif; color: #666; border-bottom: 5px solid #cf3a3e; }
.fill-a.line { color: #fff; -webkit-text-stroke: 1px #777; border-color: #000; }
.effects { width: 78px; position: relative; height: 75px; }
.effects .tall { width: 78px; }
.effects .launcher { right: 0; }
.effect-a { font: 700 30px/28px "Noto Sans", sans-serif; color: #fff; -webkit-text-stroke: 1px #8f9ad0; }
.last { border: 0; padding-left: 12px; }

.docbar { display: flex; align-items: center; height: 31px; }
.quick { display: flex; }
.quick button { width: 28px; height: 30px; }
.quick .w42 { width: 38px; }
.docs { display: flex; align-items: center; height: 31px; }
.doc { display: flex; align-items: center; height: 31px; gap: 6px; }
.doc svg { margin-left: 3px; }
.doc button { margin-left: auto; width: 26px; font-size: 20px; color: #666; }
.d1 { width: 124px; } .d2 { width: 126px; } .d3 { width: 248px; padding-left: 2px; background: #f2dfd0; border-bottom: 3px solid #d5ad92; }
.plus { width: 36px; }
.find { display: flex; align-items: center; margin-left: auto; }
.find svg { margin: 0 auto; }
.find > svg { margin: 0 2px 0 4px; }
.find input { width: 137px; }

.work { display: grid; grid-template-columns: 424px minmax(0, 1fr) 51px; }
.panel { display: flex; flex-direction: column; background: #c1c2cd; border-right: 1px solid #9fa0aa; }
.panel-head { display: flex; align-items: center; height: 40px; margin: 0 8px 9px; border-bottom: 2px solid #9c9ca6; padding-top: 6px; }
.panel-head button { height: 34px; }
.panel-head i { width: 1px; height: 15px; background: #888; margin: 0 12px; }
.panel-head .sel { color: #d0703a; border-bottom: 2px solid #d0703a; font-weight: 500; }
.panel-head .x { margin-left: auto; }
.list { contain: size; flex: 1; display: grid; grid-template-columns: minmax(0, 1fr) 23px; gap: 12px; padding-right: 10px; overflow: hidden; border-bottom: 2px solid #9c9ca6; }
.thumbs { display: flex; flex-direction: column; gap: 21px; padding-top: 10px; overflow: hidden; height: 100%; }
.thumbs > li { display: grid; grid-template-columns: 37px minmax(0, 1fr); flex: none; }
.num { text-align: right; padding: 4px 6px 0 0; font: 500 18px/20px "Liberation Serif", serif; }
.thumb { position: relative; aspect-ratio: 341 / 192; background: #fff; overflow: hidden; color: #111; font-size: 6px; line-height: 11px; }
.active .num { color: #d0703a; font-weight: 700; }
.active .thumb::after { content: ""; position: absolute; inset: 0; border: 3px solid #cd7440; }
.thumb header { display: flex; justify-content: space-between; height: 38px; padding: 8px 12px 0 26px; background: linear-gradient(#4a8ccc, #4a8ccc) 0 12px / 1px 13px no-repeat; }
.thumb header::before { content: ""; position: absolute; left: 4px; top: 12px; width: 14px; height: 13px; background: #a5b562; border-radius: 0 7px 7px 0; }
.thumb h3 { position: relative; font-size: 12px; line-height: 20px; font-weight: 500; color: #444; }
.thumb h3::after { content: ""; position: absolute; left: 1px; top: 20px; width: 16px; height: 1px; background: #6a6aa8; }
.mini { display: flex; flex-direction: column; align-items: center; width: 20px; color: #777; }
.mini b { font-size: 5px; line-height: 8px; }
.mini p { display: flex; gap: 2px; padding-top: 2px; }
.mini i { width: 4px; height: 4px; border-radius: 50%; background: #ccc; }
.mini i:last-child { background: #999; }
.thumb ul { padding-left: 34px; }
.thumb li { position: relative; white-space: nowrap; }
.thumb li::before { content: ""; position: absolute; left: -7px; top: 4px; width: 3px; height: 3px; background: #6d72b4; transform: rotate(45deg); }
.strong { font-weight: 700; }
.thumb .sub { left: 12px; }
.pair { display: flex; justify-content: space-between; padding: 21px 42px 0 8px; }
.thumb .thin { color: #555; }
.thumb .thin li::before { left: -15px; }
.callout { align-self: flex-start; width: 154px; height: 21px; margin-top: 16px; border-radius: 3px; background: #7b88e6; border: 1px solid #5f6cc8; color: #fff; text-align: center; line-height: 19px; }
.code { margin-left: 34px; padding: 4px 6px; background: #f4f4f4; color: #444; font: 6px/10px "DejaVu Sans Mono", "Noto Sans CJK SC", monospace; }
.code b { color: #3c3cd0; font-weight: 400; } .code em { color: #b04848; font-style: normal; } .code s { color: #999; text-decoration: none; }
.k8 { width: 147px; height: 29px; margin-top: 8px; padding: 0 2px; line-height: 15px; font-size: 5px; }
.s8 { padding-top: 6px; } .e8 { padding-top: 22px; }
.k9 { width: 247px; height: 32px; margin-top: 10px; padding: 6px; } .s9 { padding-top: 11px; }
.k10 { width: 194px; height: 86px; margin-top: 10px; padding-top: 3px; }
.k11 { width: 86px; height: 30px; margin-top: 8px; padding: 5px; }
.thumb footer { position: absolute; left: 5px; bottom: 1px; font-size: 4px; line-height: 10px; color: #888; }
.tri { position: absolute; right: 0; bottom: 0; width: 53px; height: 45px; }

.vbar { display: flex; flex-direction: column; align-items: center; justify-content: space-between; background: #a8a8b3; padding: 8px 0; position: relative; }
.up { border: 6px solid transparent; border-top: 0; border-bottom: 7px solid #fff; }
.down { border: 6px solid transparent; border-bottom: 0; border-top: 7px solid #fff; }
.grip { position: absolute; left: 4px; right: 3px; top: 399px; height: 293px; background: #d2d3dd; display: flex; align-items: center; justify-content: center; }
.add { height: 45px; display: flex; justify-content: center; align-items: center; padding-bottom: 2px; }
.add button { width: 75px; height: 27px; border: 1px solid #cf8f72; background: #d6d5da; margin-right: 4px; }

.editor { display: grid; grid-template-columns: minmax(0, 1fr) 23px; grid-template-rows: auto 25px 38px; background: #c0c1cc; }
.stage { padding: 20px 31px 21px 29px; background: linear-gradient(#b9b9c0, #c0c1cc 20px); }
.slide { position: relative; aspect-ratio: 1828 / 1028; background: #fefefe; color: #0b0b0b; box-shadow: 1px 1px 4px #999; overflow: hidden; }
.slide-head { display: flex; align-items: flex-start; height: 195px; padding-right: 70px; }
.blue { width: 15px; height: 72px; margin-top: 70px; background: #4a8dcc; }
.green { width: 73px; height: 72px; margin: 70px 45px 0 11px; background: #a1b265; border-radius: 0 36px 36px 0; }
h1 { position: relative; font-size: 63px; line-height: 72px; margin-top: 65px; color: #585858; font-weight: 700; }
h1::after { content: ""; position: absolute; left: 5px; top: 92px; width: 90px; height: 3px; background: #6365ab; box-shadow: 3px 4px 3px #ccc; }
.logo { margin: 43px 0 0 auto; width: 106px; display: flex; flex-direction: column; align-items: center; color: #858585; }
.logo svg { margin-right: 6px; }
.logo b { font-size: 25px; line-height: 34px; margin-top: 4px; }
.logo p { display: flex; gap: 10px; padding-top: 18px; }
.logo i { width: 28px; height: 28px; border-radius: 50%; background: #d9d9d9; }
.logo i:nth-child(2) { background: #bcbcbe; } .logo i:nth-child(3) { background: #a2a2a2; }
.body-box { position: relative; height: 597px; margin: 0 193px 0 126px; padding: 13px 0 0 57px; border: 1px solid #dedede; }
.pt { position: relative; font-size: 34px; line-height: 57px; font-weight: 700; white-space: nowrap; }
.pt::before { content: ""; position: absolute; left: -36px; top: 19px; width: 18px; height: 18px; background: #818be6; transform: rotate(45deg); }
.sample { width: 792px; height: 159px; margin: 38px 0 35px; padding: 6px 22px; background: #f3f3f4; color: #333; font: 25px/77px "DejaVu Sans Mono", "Noto Sans CJK SC", monospace; display: grid; grid-template-rows: 75px 78px; align-items: center; }
.sample b { color: #2323d8; font-weight: 400; }
.sample q { quotes: none; font-weight: 300; color: #666; margin-right: 35px; }
.sample .hi { margin: 0 0 0 40px; }
.picked { padding-top: 110px; }
.picked .pt::before { top: 23px; }
mark { display: block; width: 226px; background: #c0c0c0; color: #484848; padding-top: 9px; line-height: 48px; }
.h { position: absolute; width: 10px; height: 10px; background: #e79d72; }
.tl, .tc, .tr { top: -5px; } .ml, .mr { top: calc(50% - 5px); } .bl, .bc, .br { bottom: -5px; }
.tl, .ml, .bl { left: -5px; } .tr, .mr, .br { right: -5px; } .tc, .bc { left: calc(50% - 5px); }
.rotate { position: absolute; left: calc(50% - 10px); top: -29px; }
.ibeam { position: absolute; left: 155px; top: 357px; }
.slide footer { display: flex; gap: 26px; padding: 184px 0 0 31px; font-size: 23px; line-height: 34px; color: #8b8b8b; }
.corner { position: absolute; right: 0; bottom: 0; width: 292px; height: 249px; }
.floats { position: absolute; left: 1650px; top: 203px; display: flex; flex-direction: column; align-items: center; gap: 14px; }
.floats button { width: 35px; height: 34px; border: 1px solid #c9c9cd; background: #fff; box-shadow: 2px 2px 3px #ddd; color: #666; }
.floats .min { width: 17px; height: 17px; border: 0; border-radius: 50%; background: linear-gradient(#fff, #fff) center / 11px 3px no-repeat #6a92d8; }
.floats .zi { font-size: 18px; align-items: center; }
.zi svg { align-self: flex-end; margin: 0 0 8px -5px; }
.hbar { display: flex; align-items: center; padding-left: 8px; background: #a9a9b3; grid-row: 2; }
.hbar i { border: 6px solid transparent; border-left: 0; border-right: 5px solid #d5d5dc; }
.vbar.main { grid-column: 2; grid-row: 1 / 3; padding: 14px 0 32px; }
.main .grip { top: 458px; height: 50px; }
.ends { display: flex; flex-direction: column; align-items: center; gap: 9px; }
.notes { grid-column: 1 / 3; padding: 0 13px 4px; font-size: 16px; background: #c1c2cd; min-width: 0; }
.side { display: flex; flex-direction: column; align-items: center; background: #ececf0; padding-top: 50px; }
.side button { flex-direction: column; justify-content: flex-start; height: 62px; gap: 3px; }

.status { display: flex; height: 27px; align-items: center; background: #dfdfe3; }
.pages { width: 438px; text-align: center; border-right: 1px solid #aaa; line-height: 15px; }
.theme { width: 270px; padding-left: 22px; text-align: center; border-right: 1px solid #aaa; line-height: 15px; }
.views { display: flex; align-items: center; margin-left: auto; height: 27px; }
.views button { height: 27px; }
.views .on { background: #f0c9b8; }
.views .play { width: 42px; background: #d4733a; margin: 0 22px 0 12px; }
.pct { width: 46px; white-space: nowrap; }
.views input { appearance: none; width: 167px; height: 20px; margin: 0 2px; background: linear-gradient(90deg, #d9d9dd, #dc8748 15%, #dc8748 50%, #777 50%) center / 100% 2px no-repeat; }
.views input::-webkit-slider-thumb { appearance: none; width: 17px; height: 17px; border-radius: 50%; border: 2px solid #999; background: #f4f4f4; }
.views .fit { width: 13px; }

.taskbar { display: flex; height: 34px; background: linear-gradient(90deg, #222c2d, #22222e 60%, #231e30); color: #eee; }
.start { width: 43px; }
.start.view { width: 47px; margin-right: 2px; }
.task { width: 199px; justify-content: flex-start; padding-left: 10px; gap: 6px; margin-right: 2px; }
.task.open { background: #475150; }
.tray { display: flex; margin-left: auto; padding-right: 10px; }
.tray button { min-width: 30px; }
.ime { font-size: 17px; }
.badge { width: 27px; height: 27px; border-radius: 50%; line-height: 25px; background: #3fae76; border: 1px solid #57c98c; color: #fff; }

.mark { position: absolute; color: #f1f1fa; opacity: .8; white-space: nowrap; font-weight: 700; }
.author { right: 240px; bottom: 44px; font-size: 47px; line-height: 64px; }
.site { right: 50px; bottom: 40px; font: 700 61px/80px Roboto, sans-serif; }

.bottom { position: relative; flex: 1; min-height: 162px; display: flex; justify-content: center; align-items: flex-end; padding-bottom: 16px; }
.home { width: 630px; height: 11px; border-radius: 6px; background: #fff; }
.url, .csdn { position: absolute; bottom: 9px; color: #aaa; white-space: nowrap; }
.url { right: 10px; font: 16px/20px "Liberation Sans", sans-serif; }
.csdn { right: 14px; font-size: 20px; color: #ccc; }
```
